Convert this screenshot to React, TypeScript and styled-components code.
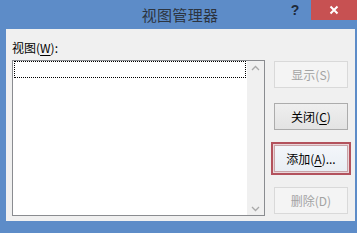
import React from "react";
import styled, { createGlobalStyle } from "styled-components";

const Global = createGlobalStyle`
  html, body { margin: 0; padding: 0; }
  body { width: 357px; height: 233px; overflow: hidden; background: #5d8cc8; }
`;

const FONT = `"Noto Sans CJK SC", "Noto Sans", "Liberation Sans", sans-serif`;

const Frame = styled.div`
  width: 357px;
  height: 233px;
  background: #5d8cc8;
  display: flex;
  flex-direction: column;
  font-family: ${FONT};
`;

const TitleBar = styled.div`
  height: 29px;
  display: flex;
  align-items: flex-start;
  flex: none;
`;

const Title = styled.div`
  flex: 1;
  padding-left: 77px;
  text-align: center;
  font-size: 15px;
  line-height: 29px;
  color: #2c3440;
  letter-spacing: 0.3px;
`;

const HelpButton = styled.div`
  width: 24px;
  height: 20px;
  margin-right: 4px;
  display: flex;
  align-items: center;
  justify-content: center;
  font-family: "Liberation Sans", sans-serif;
  font-weight: bold;
  font-size: 14px;
  color: #1e2a3a;
`;

const CloseButton = styled.div`
  width: 46px;
  height: 20px;
  background: #c75152;
  display: flex;
  align-items: center;
  justify-content: center;
`;

const Client = styled.div`
  flex: 1;
  margin: 0 2px 12px 6px;
  background: #f0f0f0;
  padding: 11px 0 0 6px;
  display: flex;
  gap: 9px;
  font-size: 12px;
  color: #000;
`;

const LeftColumn = styled.div`
  width: 253px;
  display: flex;
  flex-direction: column;
`;

const Label = styled.div`
  height: 16px;
  line-height: 16px;
  margin-bottom: 4px;
`;

const Mnemonic = styled.span`
  text-decoration: underline;
  text-underline-offset: 2px;
`;

const ListBox = styled.div`
  height: 156px;
  box-sizing: border-box;
  border: 1px solid #8a8c90;
  background: #fff;
  display: flex;
`;

const Items = styled.div`
  flex: 1;
  padding: 0 1px;
`;

const FocusRow = styled.div`
  height: 17px;
  box-sizing: border-box;
  border: 1px dotted #000;
`;

const ScrollBar = styled.div`
  width: 17px;
  background: #f0f0f0;
  display: flex;
  flex-direction: column;
  justify-content: space-between;
  align-items: center;
  padding: 4px 0 3px;
`;

const RightColumn = styled.div`
  display: flex;
  flex-direction: column;
  gap: 15px;
  margin-top: 21px;
`;

const Button = styled.div<{ $disabled?: boolean; $default?: boolean }>`
  width: 74px;
  height: 27px;
  box-sizing: border-box;
  display: flex;
  align-items: center;
  justify-content: center;
  font-size: 12px;
  color: ${(p) => (p.$disabled ? "#a3a3a3" : "#000")};
  border: 1px solid ${(p) => (p.$disabled ? "#d9d9d9" : p.$default ? "#c9a3a8" : "#acacac")};
  background: ${(p) =>
    p.$disabled
      ? "#f4f4f4"
      : p.$default
      ? "linear-gradient(#f3f6fa, #e9eef4)"
      : "linear-gradient(#efefef, #e3e3e3)"};
  box-shadow: ${(p) =>
    p.$default ? "0 0 0 1px #e9d6d9, 0 0 0 3px #b3525d" : "none"};
`;

const Chevron = ({ up }: { up?: boolean }) => (
  <svg width="9" height="6" viewBox="0 0 9 6">
    <path
      d={up ? "M1 5 L4.5 1.5 L8 5" : "M1 1 L4.5 4.5 L8 1"}
      fill="none"
      stroke="#a9a9a9"
      strokeWidth="1.3"
    />
  </svg>
);

export default function App() {
  return (
    <>
      <Global />
      <Frame>
        <TitleBar>
          <Title>视图管理器</Title>
          <HelpButton>?</HelpButton>
          <CloseButton>
            <svg width="10" height="10" viewBox="0 0 10 10">
              <path d="M1.5 1.5 L8.5 8.5 M8.5 1.5 L1.5 8.5" stroke="#fff" strokeWidth="2" />
            </svg>
          </CloseButton>
        </TitleBar>
        <Client>
          <LeftColumn>
            <Label>
              视图(<Mnemonic>W</Mnemonic>):
            </Label>
            <ListBox>
              <Items>
                <FocusRow />
              </Items>
              <ScrollBar>
                <Chevron up />
                <Chevron />
              </ScrollBar>
            </ListBox>
          </LeftColumn>
          <RightColumn>
            <Button $disabled>显示(S)</Button>
            <Button>
              关闭(<Mnemonic>C</Mnemonic>)
            </Button>
            <Button $default>
              添加(<Mnemonic>A</Mnemonic>)...
            </Button>
            <Button $disabled>删除(D)</Button>
          </RightColumn>
        </Client>
      </Frame>
    </>
  );
}
